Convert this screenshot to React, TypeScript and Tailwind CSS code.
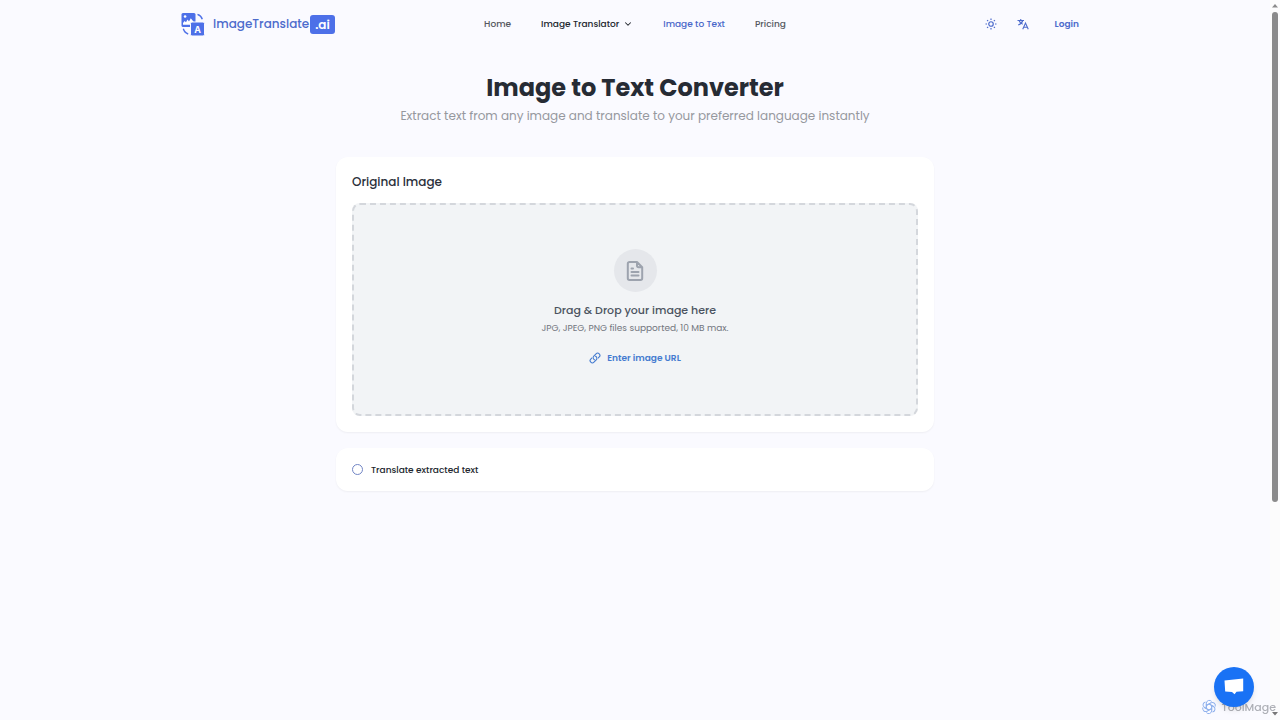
import { ChevronDown } from "lucide-react";

const navLinks = [
  { label: "Home", className: "text-[#555860]" },
  { label: "Image Translator", className: "text-[#22262e]", menu: true },
  { label: "Image to Text", className: "text-[#4967c9]" },
  { label: "Pricing", className: "text-[#555860]" },
];

const LogoMark = () => (
  <svg viewBox="0 0 24 24" className="size-6" fill="none" aria-hidden="true">
    <rect x="0.5" y="1" width="14" height="14" rx="1.5" fill="#4d70e8" />
    <circle cx="4.1" cy="4.5" r="1.3" fill="#fff" />
    <path d="M2 12.8V11l1.6-2 1.4 1.3 1.5-2.7L8 9.5l1.8-3.3 3.200 4v2.600z" fill="#fff" />
    <rect x="9.5" y="10" width="14" height="14" rx="1.5" fill="#4d70e8" stroke="#fafaff" />
    <path d="M16.5 2.3c2.4.8 4.1 2.5 4.8 5M2.3 16.8c.8 2.5 2.3 4.4 4.9 5.2" stroke="#4d70e8" strokeWidth="1.4" />
    <text x="16.6" y="20.5" textAnchor="middle" fill="#fff" fontSize="9" fontWeight="700" fontFamily="Inter, sans-serif">
      A
    </text>
  </svg>
);

const SunIcon = () => (
  <svg viewBox="0 0 24 24" className="size-3" fill="none" stroke="currentColor" strokeWidth="2.4" aria-hidden="true">
    <circle cx="12" cy="12" r="4.5" />
    <path d="M12 1v3M12 20v3M1 12h3M20 12h3M4.2 4.2l2.1 2.1M17.7 17.7l2.1 2.1M4.2 19.8l2.1-2.1M17.7 6.3l2.1-2.1" />
  </svg>
);

const TranslateIcon = () => (
  <svg viewBox="0 0 24 24" className="size-3" fill="none" stroke="currentColor" strokeWidth="2.2" aria-hidden="true">
    <path d="M1 5h13M7.5 2v3M11.5 5c-1 4-4.5 7-9 9M4 5c1.2 3.5 4 6 7.5 7.5M11.5 22.5 17 10l5.5 12.5M13.5 18.5h7" />
  </svg>
);

const DocumentIcon = () => (
  <svg
    viewBox="0 0 22 22"
    className="size-[22px]"
    fill="none"
    stroke="#9da3ae"
    strokeWidth="2"
    strokeLinecap="round"
    strokeLinejoin="round"
    aria-hidden="true"
  >
    <path d="M13 2H5.500a1.700 1.700 0 0 0-1.700 1.700v14.600a1.700 1.700 0 0 0 1.700 1.700h11a1.700 1.700 0 0 0 1.700-1.700V7.200zM13 2v3.500a1.700 1.700 0 0 0 1.700 1.700h3.500M7.500 8.500h1.500M7.500 12h7M7.500 15.500h7" />
  </svg>
);

const LinkIcon = () => (
  <svg
    viewBox="0 0 24 24"
    className="size-3"
    fill="none"
    stroke="currentColor"
    strokeWidth="2.2"
    strokeLinecap="round"
    strokeLinejoin="round"
    aria-hidden="true"
  >
    <path d="M13.190 8.688a4.500 4.500 0 0 1 1.242 7.244l-4.500 4.500a4.500 4.500 0 0 1-6.364-6.364l1.757-1.757m13.350-.622 1.757-1.757a4.500 4.500 0 0 0-6.364-6.364l-4.500 4.500a4.500 4.500 0 0 0 1.242 7.244" />
  </svg>
);

const Header = () => (
  <header className="mx-auto grid h-12 w-full max-w-[908px] grid-cols-[1fr_auto_1fr] items-center">
    <a href="#" className="flex items-center text-[#4d6bcc]">
      <LogoMark />
      <span className="ml-2 text-xs font-medium">ImageTranslate</span>
      <span className="ml-px rounded-[3px] bg-[#4d70e8] px-[5px] text-xs leading-[19px] font-semibold text-white">.ai</span>
    </a>

    <nav className="flex items-center gap-[30px] text-[9px] leading-4 font-medium">
      {navLinks.map((link) =>
        link.menu ? (
          <button key={link.label} type="button" className={`flex items-center gap-1 ${link.className}`}>
            {link.label}
            <ChevronDown className="size-2.5" strokeWidth={2.5} />
          </button>
        ) : (
          <a key={link.label} href="#" className={link.className}>
            {link.label}
          </a>
        )
      )}
    </nav>

    <div className="flex items-center justify-end gap-5 pr-2.5 text-[#4d6bcc]">
      <button type="button" aria-label="Toggle theme">
        <SunIcon />
      </button>
      <button type="button" aria-label="Change language">
        <TranslateIcon />
      </button>
      <a href="#" className="ml-1.5 text-[9px] leading-4 font-semibold">
        Login
      </a>
    </div>
  </header>
);

const ScrollRail = () => (
  <div className="sticky top-0 flex h-screen w-2.5 shrink-0 flex-col items-center bg-[#fcfcfc]" aria-hidden="true">
    <svg viewBox="0 0 10 12" className="h-3 w-2.5 shrink-0" fill="#8b8b8b">
      <path d="M2 7.5 5 4l3 3.5z" />
    </svg>
    <div className="h-[68%] w-1.5 rounded-full bg-[#8b8b8b]" />
    <svg viewBox="0 0 10 12" className="mt-auto h-3 w-2.5 shrink-0" fill="#777">
      <path d="M2 4h6L5 7.5z" />
    </svg>
  </div>
);

const Watermark = () => (
  <div className="fixed right-1 bottom-1 z-10 flex items-center gap-1 text-[#9b9da5]/80">
    <svg viewBox="0 0 24 24" className="size-4" fill="none" stroke="#8eb0ed" strokeWidth="1.5" aria-hidden="true">
      {[0, 60, 120, 180, 240, 300].map((angle) => (
        <path key={angle} d="M8 14.300V6.500a4.500 4.500 0 0 1 8-2.800M8 9.700l6.500-3.800" transform={`rotate(${angle} 12 12)`} />
      ))}
    </svg>
    <span className="text-[11px] leading-[18px] font-medium">ToolMage</span>
  </div>
);

const App = () => {
  return (
    <div className="flex min-h-screen bg-[#fafaff] font-[Poppins,Inter,sans-serif]">
      <div className="min-w-0 flex-1">
        <Header />

        <main className="mx-auto w-full max-w-[598px] pt-6">
          <div className="text-center">
            <h1 className="text-2xl leading-8 font-bold text-[#262b34]">Image to Text Converter</h1>
            <p className="text-xs leading-6 text-[#96989e]">
              Extract text from any image and translate to your preferred language instantly
            </p>
          </div>

          <section className="mt-[29px] rounded-xl bg-white p-4 shadow-xs">
            <h2 className="text-xs leading-[18px] font-medium text-[#2b303b]">Original Image</h2>
            <div className="mt-3 flex h-[213px] flex-col items-center rounded-lg border-2 border-dashed border-[#d4d7dc] bg-[#f2f4f6] pt-11">
              <div className="flex size-[43px] items-center justify-center rounded-full bg-[#e5e7eb]">
                <DocumentIcon />
              </div>
              <p className="mt-2 text-[11px] leading-5 font-medium text-[#4b5360]">Drag &amp; Drop your image here</p>
              <p className="text-[9px] leading-4 text-[#72767e]">JPG, JPEG, PNG files supported, 10 MB max.</p>
              <button
                type="button"
                className="mt-3 flex items-center gap-1.5 text-[9px] leading-5 font-semibold text-[#447bd0]"
              >
                <LinkIcon />
                Enter image URL
              </button>
            </div>
          </section>

          <section className="mt-4 flex h-[43px] items-center rounded-xl bg-white px-4 shadow-xs">
            <label className="flex items-center gap-2 text-[9px] leading-4 font-medium text-[#22262e]">
              <input
                type="radio"
                name="translate"
                className="size-[11px] appearance-none rounded-full border border-[#7185c5] checked:bg-[#4d70e8]"
              />
              Translate extracted text
            </label>
          </section>
        </main>
      </div>

      <ScrollRail />
      <Watermark />

      {/* Chat launcher */}
      <button
        type="button"
        aria-label="Open chat"
        className="fixed right-[26px] bottom-[13px] z-20 flex size-10 items-center justify-center rounded-full bg-[#1972f5] shadow-md"
      >
        <svg viewBox="0 0 20 18" className="h-[18px] w-5" fill="#fff" aria-hidden="true">
          <path d="M.5 2.5 19.2.5v12.8l-6.7.5-2 2.5-2.5-2.3-6.8-.5z" />
        </svg>
      </button>
    </div>
  );
};

export default App;
